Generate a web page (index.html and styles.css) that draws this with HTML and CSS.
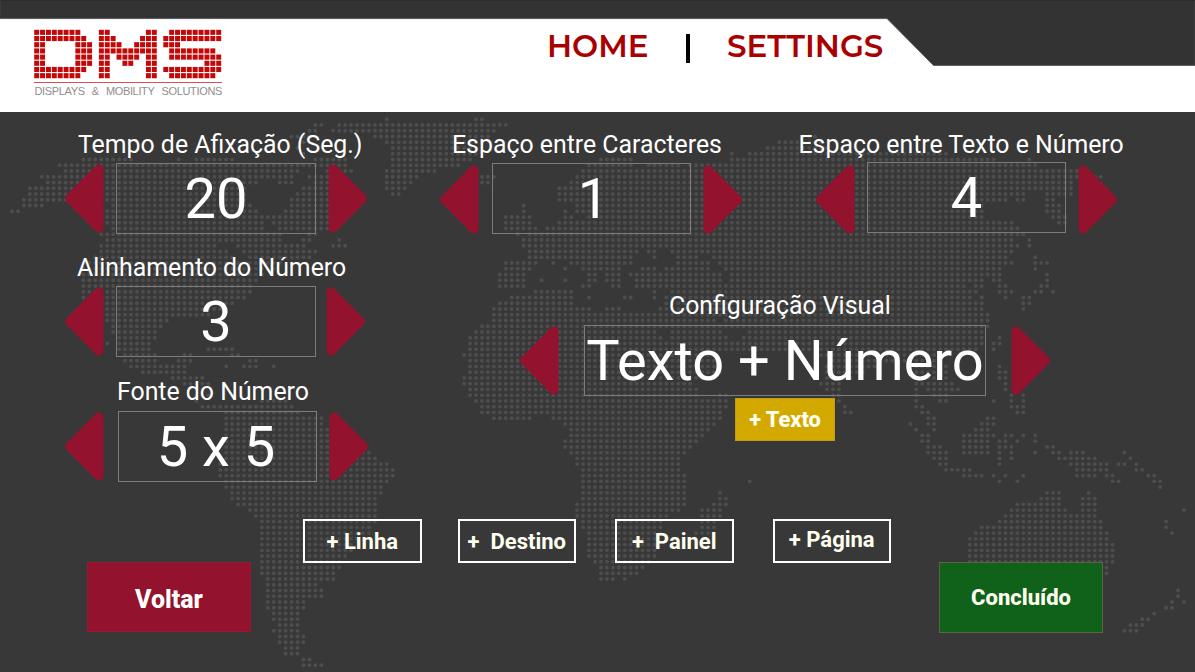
FILE: index.html
```html
<!DOCTYPE html>
<html lang="pt">
<head>
<meta charset="utf-8">
<title>DMS – Settings</title>
<link rel="stylesheet" href="styles.css">
</head>
<body>
<svg class="map" id="map" viewBox="0 0 1195 672" aria-hidden="true"></svg>

<header class="header">
  <svg class="header-shape" viewBox="0 0 1195 112" aria-hidden="true">
    <path d="M0 0H1195V65.4H933.5L887 18.6H0Z" fill="#333333" stroke="#4a4a4a" stroke-width=".8"/>
    <path d="M0 .5H1195" stroke="#2d2d2d"/>
  </svg>
  <div class="logo">
    <svg class="logo-dots" id="logo" viewBox="0 0 188 50" aria-label="DMS"></svg>
    <div class="logo-caption"><span>DISPLAYS</span><span>&amp;</span><span>MOBILITY</span><span>SOLUTIONS</span></div>
  </div>
  <nav class="nav">
    <a class="nav-link nav-home">HOME</a>
    <span class="nav-sep"></span>
    <a class="nav-link nav-settings">SETTINGS</a>
  </nav>
</header>

<main class="main">
  <div class="controls">
    <div class="column-left">
      <section class="spinner spinner-time">
        <h2 class="label">Tempo de Afixação (Seg.)</h2>
        <div class="row">
          <svg class="arrow" viewBox="0 0 39 69"><use href="#tri"/></svg>
          <div class="value">20</div>
          <svg class="arrow flip" viewBox="0 0 39 69"><use href="#tri"/></svg>
        </div>
      </section>
      <section class="spinner spinner-align">
        <h2 class="label">Alinhamento do Número</h2>
        <div class="row">
          <svg class="arrow" viewBox="0 0 39 69"><use href="#tri"/></svg>
          <div class="value">3</div>
          <svg class="arrow flip" viewBox="0 0 39 69"><use href="#tri"/></svg>
        </div>
      </section>
      <section class="spinner spinner-font">
        <h2 class="label">Fonte do Número</h2>
        <div class="row">
          <svg class="arrow" viewBox="0 0 39 69"><use href="#tri"/></svg>
          <div class="value">5 x 5</div>
          <svg class="arrow flip" viewBox="0 0 39 69"><use href="#tri"/></svg>
        </div>
      </section>
    </div>
    <div class="column-right">
      <div class="pair">
        <section class="spinner spinner-chars">
          <h2 class="label">Espaço entre Caracteres</h2>
          <div class="row">
            <svg class="arrow" viewBox="0 0 39 69"><use href="#tri"/></svg>
            <div class="value">1</div>
            <svg class="arrow flip" viewBox="0 0 39 69"><use href="#tri"/></svg>
          </div>
        </section>
        <section class="spinner spinner-text">
          <h2 class="label">Espaço entre Texto e Número</h2>
          <div class="row">
            <svg class="arrow" viewBox="0 0 39 69"><use href="#tri"/></svg>
            <div class="value">4</div>
            <svg class="arrow flip" viewBox="0 0 39 69"><use href="#tri"/></svg>
          </div>
        </section>
      </div>
      <section class="spinner spinner-visual">
        <h2 class="label">Configuração Visual</h2>
        <div class="row">
          <svg class="arrow" viewBox="0 0 39 69"><use href="#tri"/></svg>
          <div class="value">Texto + Número</div>
          <svg class="arrow flip" viewBox="0 0 39 69"><use href="#tri"/></svg>
        </div>
      </section>
      <button class="add-text">+ Texto</button>
    </div>
  </div>
  <div class="adders">
    <button class="add add-line">+ Linha</button>
    <button class="add">+&nbsp; Destino</button>
    <button class="add">+&nbsp; Painel</button>
    <button class="add add-page">+ Página</button>
  </div>
  <div class="footer">
    <button class="action back">Voltar</button>
    <button class="action done">Concluído</button>
  </div>
</main>

<svg class="defs" aria-hidden="true">
  <symbol id="tri" viewBox="0 0 39 69"><path d="M4.6 34.5L34 5V64Z" fill="#93132e" stroke="#93132e" stroke-width="9" stroke-linejoin="round"/></symbol>
</svg>
<script src="dots.js"></script>
</body>
</html>
```
FILE: styles.css
```css
* { box-sizing: border-box; }
body {
  margin: 0;
  width: 1195px;
  height: 672px;
  position: relative;
  overflow: hidden;
  background: #383838;
  font-family: Roboto, "Liberation Sans", sans-serif;
  color: #fff;
}
.map { position: absolute; inset: 0; width: 1195px; height: 672px; z-index: -1; }
.defs { position: absolute; width: 0; height: 0; }

.header {
  position: relative;
  height: 112px;
  background: #fff;
  display: flex;
  align-items: flex-start;
}
.header-shape { position: absolute; inset: 0; width: 1195px; height: 112px; }
.logo { position: relative; width: 188px; margin: 29px 0 0 34px; }
.logo-dots { display: block; width: 188px; height: 50px; }
.logo-caption {
  display: flex;
  justify-content: space-between;
  margin-top: 3px;
  border-top: 1.5px solid #d84f4f;
  padding: 2px 0 0 .5px;
  font: 11px/13px "Liberation Sans", Arial, sans-serif;
  letter-spacing: -.35px;
  color: #8e8e8e;
}
.nav {
  position: relative;
  display: flex;
  align-items: center;
  margin: 28px 0 0 325px;
  height: 38px;
}
.nav-link {
  font: 600 31px/38px Montserrat, Inter, sans-serif;
  color: #a90000;
  white-space: nowrap;
  margin-top: -2px;
}
.nav-home { width: 102px; }
.nav-sep { width: 4px; height: 29px; margin: 2px 37px 0 37px; background: #000; }

.main { display: flex; flex-direction: column; height: 560px; }
.controls { display: flex; height: 407px; }
.column-left { width: 375px; padding: 16px 0 0 65px; }
.column-right { width: 820px; padding-top: 16px; }
.pair { display: flex; height: 162px; }

.spinner { --left: 12px; --right: 12px; --w: 200px; }
.label {
  margin: 0;
  height: 32px;
  padding-top: 1px;
  font-size: 24.85px;
  line-height: 32px;
  font-weight: 400;
  white-space: nowrap;
}
.row { display: flex; align-items: flex-start; margin-top: 3px; }
.arrow { width: 39px; height: 69px; margin-top: 1px; flex: none; }
.flip { transform: scaleX(-1); }
.value {
  flex: none;
  width: var(--w);
  height: 71px;
  margin: 0 var(--right) 0 var(--left);
  border: 1px solid #7c7c7c;
  font-size: 56px;
  line-height: 71px;
  text-align: center;
  white-space: nowrap;
}
.spinner-time { height: 123px; }
.spinner-time .label { padding-left: 13px; }
.spinner-align { height: 125px; --right: 10px; }
.spinner-align .label { padding-left: 12px; }
.spinner-align .row { --left: 12px; }
.spinner-font { --right: 12px; --w: 199px; }
.spinner-font .label { padding: 0 0 0 52px; }
.spinner-font .row { --left: 14px; }
.spinner-font .value { padding-right: 3px; }
.spinner-chars { width: 376px; margin-left: 65px; --left: 13px; --w: 199px; }
.spinner-chars .label { padding-left: 12px; }
.spinner-chars .value { padding-left: 4px; }
.spinner-text { --w: 199px; }
.spinner-text .label { margin-left: -17.5px; }
.spinner-text .row { margin-top: 2px; }
.spinner-text .arrow { margin-top: 3px; }
.spinner-chars .arrow { margin-top: 2px; }
.spinner-visual { margin-left: 145px; --left: 25px; --right: 25px; --w: 402px; }
.spinner-visual .label { padding: 0 0 0 149px; }
.add-text {
  display: block;
  width: 100px;
  height: 43px;
  margin: 2px 0 0 360px;
  border: 1px solid #bf9a1c;
  padding: 0;
  background: #d3a900;
  color: #fffff4;
  font: 800 21.8px/42px Roboto, sans-serif;
}

.adders { display: flex; gap: 39px; padding-left: 303px; height: 43px; }
.add {
  width: 118.5px;
  height: 43.5px;
  border: 2px solid #fff;
  padding: 2px 0 0;
  background: transparent;
  color: #fffff0;
  font: 700 22px/38px Roboto, sans-serif;
  white-space: nowrap;
}
.add-line { margin-right: -3px; }
.add-page { padding: 0 0 3px; }
.footer { display: flex; justify-content: space-between; padding: 0 92px 0 87px; }
.action { width: 164px; height: 70px; border: 1px solid; padding: 0; color: #fff; font: 800 25px/68px Roboto, sans-serif; }
.back { background: #93132e; border-color: #98192f; padding-top: 3px; }
.done { height: 71px; background: #10611a; border-color: #5b6546; color: #fffff0; font-size: 22px; }
```
FILE: dots.js
```javascript
const NS = 'http://www.w3.org/2000/svg';

// Column runs of the dotted world map, one entry per row from the top.
const mapRows = [
  '63 78-79', '51-52 55-83', '50-51 54-81', '47-51 61-80 133-135', '49-50 63-79 129-136',
  '48 64-78 127-137', '49 64-78 121 124-157', '12-20 28 31-37 51-56 64-77 99-104 121-165 171',
  '8-56 64-75 97-104 107-112 114-172', '9-48 53-57 63-71 96-179', '5-47 50-54 63-68 79-81 95-183',
  '6-41 45-47 51-54 63-67 79-80 94-178', '3-39 49-54 63-66 92-178', '3-39 48-55 64-65 92-170 174-178',
  '2-39 47-56 92-167 169-170 174-175', '2-5 17-40 47-55 86 95-163 174-176', '0-1 16-41 46-55 86 93 95-163 174-176',
  '16-43 44-55 83-87 93-94 97-163 175-177', '16-42 44-54 83-87 92-168 176-177', '17-42 45-53 83-88 90-169',
  '15-45 50-51 85 87-170', '16-45 49-50 55 86-168 171', '15-34 38-49 54-56 86-169 171', '15-36 39-51 87-105 107-108 111-168',
  '14-37 40-50 87-104 108 112-115 118-167 172', '13-45 83-88 91 94-104 112-117 119-168 172-174',
  '12-44 83-87 93 96-102 106-108 110-117 120-166 172', '12-42 82-86 97-98 100-102 104-119 121-166 174',
  '12-41 82-86 89 93 97-98 100-102 105-119 121-163 165-166 174', '12-40 82-86 96-97 101-102 105-160 162-163 166-167 173-174',
  '12-40 88-94 108 111-162 166-168 172-173 175', '12-39 84-94 97 103-104 108 110-161 163 167 170-171',
  '14-37 82-94 110-163 170-171', '16-36 81-97 100-102 109-163 170', '16-33 81-164', '16-26 81-118 120-164', '17-25 79-164',
  '17-24 78-108 111-119 124-163', '18-24 77-109 111-120 123-163 166', '16 18-23 77-163 165-166', '18-23 33-37 77-162 165',
  '19-24 29-30 37-38 76-118 135-155', '19-24 28-30 40-41 77-118 138-156', '20-29 36 39-41 44 77-118 137-145 152-157 166',
  '22-29 77-119 137-143 152-157 166-167', '27-32 76-118 137-141 152-157 166-167', '29-33 76-114 136-139 152-158 167',
  '31-32 77-115 137-139 152 154-159 167', '31-33 77-115 119-120 138-139 152 155-157 168 170', '31 42-46 78-120 139 152 156-157 165 168 170',
  '32-47 79-120 140 152-153 168-170', '36-48 79-119 140-141 153-154 169-170', '36-52 81-87 91-119 154-155 164-165',
  '36-52 93-118 151 154-155 163-165', '36-53 94-117 152 155 162-164', '36-53 94-116 153-154 160-165 167-168 170 172',
  '36-53 93-115 153-154 160-164 166-167 169 172', '36-53 93-114 154-156 160-164 166-168 174-175',
  '36-60 94-113 154-157 160-164 166 168 172 175-176 178-180 187', '35-61 95-112 155-157 166 168 176-182 188',
  '35-63 95-112 156-157 166 178-184 186-187 189', '35-64 96-112 157-161 179-184 189-190', '35-64 96-113 160-163 165 167 170 179-182 184-185 191-192',
  '36-63 96-113 124 166 169 185-186 192-193', '36-62 96-113 193', '37-62 96-113 119 174-176 181', '37-61 96-113 119-120 173-176 180-182',
  '38-61 95-113 118-120 169-176 180-182', '40-61 95-112 116-119 168-177 180-182 197', '41-61 95-110 116-119 167-182',
  '42-61 96-109 116-118 166-183 194', '42-60 96-109 116-118 163-183 194', '42-60 97-109 115-117 162-184 195',
  '42-58 97-108 161-184', '42-57 97-108 161-185', '42-57 97-108 161-185', '42-56 97-108 161-185', '42-55 98-107 161-185',
  '42-55 99-106 184', '42-54 99-105 184', '43-54 99-101 103', '43-51', '43-52 196', '43-52 196', '43-49 195 197', '43-49 194-195',
  '44-48 192', '44-48 190-191', '45-48 188-190', '44-48 187-189', '45-49', '45-49', '46-48', '46-48', '49-50', '49-52'
];

function eachCell(rows, draw) {
  rows.forEach((row, r) => row.split(' ').forEach(run => {
    const [from, to = from] = run.split('-').map(Number);
    for (let c = from; c <= to; c++) draw(c, r);
  }));
}

const map = document.getElementById('map');
eachCell(mapRows, (c, r) => {
  const dot = document.createElementNS(NS, 'circle');
  dot.setAttribute('cx', 12 + 5.949 * c);
  dot.setAttribute('cy', 119.3 + 5.747 * r);
  dot.setAttribute('r', 1.95);
  dot.setAttribute('fill', '#4d4d4d');
  map.appendChild(dot);
});

// Letters of the logo: left offset and the cell runs of each row.
const letters = [
  [0.2, ['0-7', '0-8', '0-1 7-9', '0-1 7-9', '0-1 7-9', '0-1 7-9', '0-8', '0-7']],
  [64.9, ['0-1 8-9', '0-2 7-9', '0-3 6-9', '0-9', '0-1 3-6 8-9', '0-1 4-5 8-9', '0-1 8-9', '0-1 8-9']],
  [129.3, ['1-9', '0-9', '0-2', '1-8', '1-9', '7-9', '0-9', '1-8']]
];
const logo = document.getElementById('logo');
letters.forEach(([left, rows]) => eachCell(rows, (c, r) => {
  const cell = document.createElementNS(NS, 'rect');
  cell.setAttribute('x', left + 5.88 * c);
  cell.setAttribute('y', 0.8 + 6.19 * r);
  cell.setAttribute('width', 4.95);
  cell.setAttribute('height', 5.1);
  cell.setAttribute('fill', '#c40808');
  logo.appendChild(cell);
}));
```
